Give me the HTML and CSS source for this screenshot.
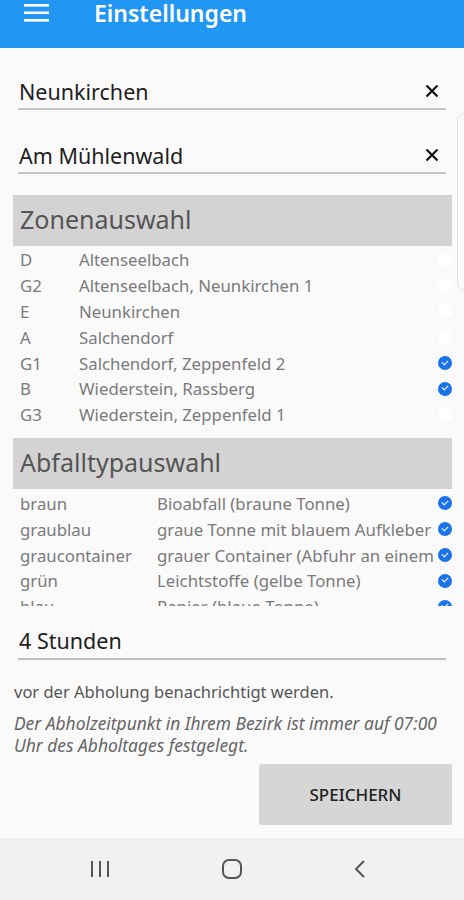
FILE: index.html
```html
<!DOCTYPE html>
<html lang="de">
<head>
  <meta charset="UTF-8">
  <meta name="viewport" content="width=device-width, initial-scale=1.0">
  <title>Einstellungen</title>
  <link rel="stylesheet" href="styles.css">
</head>
<body>
<div class="app">
  <header class="toolbar">
    <svg class="menu-icon" width="26" height="22" viewBox="0 0 26 22">
      <rect x="0" y="4" width="25" height="2.6" fill="#fff"/>
      <rect x="0" y="11.5" width="25" height="2.6" fill="#fff"/>
      <rect x="0" y="19" width="25" height="2.6" fill="#fff"/>
    </svg>
    <h1 class="title">Einstellungen</h1>
  </header>

  <main class="content">
    <div class="field first">
      <span class="field-text">Neunkirchen</span>
      <svg class="clear" width="14" height="14" viewBox="0 0 14 14"><path d="M1.5 1.5 L12.5 12.5 M12.5 1.5 L1.5 12.5" stroke="#111" stroke-width="2.2"/></svg>
    </div>
    <div class="field second">
      <span class="field-text">Am Mühlenwald</span>
      <svg class="clear" width="14" height="14" viewBox="0 0 14 14"><path d="M1.5 1.5 L12.5 12.5 M12.5 1.5 L1.5 12.5" stroke="#111" stroke-width="2.2"/></svg>
    </div>

    <div class="section-head zone-head">Zonenauswahl</div>
    <ul class="select-list zones">
      <li><span class="code">D</span><span class="name">Altenseelbach</span><span class="check"></span></li>
      <li><span class="code">G2</span><span class="name">Altenseelbach, Neunkirchen 1</span><span class="check"></span></li>
      <li><span class="code">E</span><span class="name">Neunkirchen</span><span class="check"></span></li>
      <li><span class="code">A</span><span class="name">Salchendorf</span><span class="check"></span></li>
      <li><span class="code">G1</span><span class="name">Salchendorf, Zeppenfeld 2</span><span class="check on"></span></li>
      <li><span class="code">B</span><span class="name">Wiederstein, Rassberg</span><span class="check on"></span></li>
      <li><span class="code">G3</span><span class="name">Wiederstein, Zeppenfeld 1</span><span class="check"></span></li>
    </ul>

    <div class="section-head waste-head">Abfalltypauswahl</div>
    <ul class="select-list waste">
      <li><span class="code">braun</span><span class="name">Bioabfall (braune Tonne)</span><span class="check on"></span></li>
      <li><span class="code">graublau</span><span class="name">graue Tonne mit blauem Aufkleber</span><span class="check on"></span></li>
      <li><span class="code">graucontainer</span><span class="name">grauer Container (Abfuhr an einem Tag)</span><span class="check on"></span></li>
      <li><span class="code">grün</span><span class="name">Leichtstoffe (gelbe Tonne)</span><span class="check on"></span></li>
      <li><span class="code">blau</span><span class="name">Papier (blaue Tonne)</span><span class="check on"></span></li>
    </ul>

    <div class="field hours">
      <span class="field-text">4 Stunden</span>
    </div>
    <p class="note">vor der Abholung benachrichtigt werden.</p>
    <p class="hint">Der Abholzeitpunkt in Ihrem Bezirk ist immer auf 07:00 Uhr des Abholtages festgelegt.</p>

    <div class="actions">
      <button class="save">SPEICHERN</button>
    </div>
  </main>

  <nav class="navbar">
    <svg width="22" height="18" viewBox="0 0 22 18"><path d="M3 1 V17 M11 1 V17 M19 1 V17" stroke="#555" stroke-width="2"/></svg>
    <svg width="22" height="22" viewBox="0 0 22 22"><rect x="2" y="2" width="18" height="18" rx="6" fill="none" stroke="#555" stroke-width="2"/></svg>
    <svg width="14" height="20" viewBox="0 0 14 20"><path d="M11 2 L3 10 L11 18" fill="none" stroke="#555" stroke-width="2"/></svg>
  </nav>

  <div class="edge-handle"></div>
</div>
</body>
</html>
```

FILE: styles.css
```css
*{
  box-sizing: border-box;
}
html, body{
  margin: 0;
  padding: 0;
}
body{
  font-family: "Noto Sans", Roboto, "Liberation Sans", sans-serif;
  background: #fafafa;
}
.app{
  position: relative;
  width: 464px;
  height: 900px;
  display: flex;
  flex-direction: column;
  overflow: hidden;
}
.toolbar{
  height: 48px;
  background: #2196f3;
  display: flex;
  align-items: flex-start;
  padding-left: 24px;
  flex-shrink: 0;
}
.title{
  margin: 0 0 0 44px;
  color: #fff;
  font-size: 23px;
  font-weight: 600;
  line-height: 26px;
}
.content{
  flex: 1;
  display: flex;
  flex-direction: column;
  padding: 0 12px 0 13px;
}
.field{
  display: flex;
  align-items: center;
  justify-content: space-between;
  margin: 0 6px 0 5px;
  border-bottom: 2px solid #c4c4c4;
  height: 38px;
  padding: 0 7px 0 1px;
}
.field.first{
  margin-top: 24px;
}
.field.second{
  margin-top: 26px;
}
.field-text{
  font-size: 21.5px;
  color: #1e1e1e;
  padding-top: 2px;
}
.clear{
  margin-top: 2px;
}
.section-head{
  background: #d3d3d3;
  color: #555;
  font-size: 25px;
  height: 51px;
  line-height: 49px;
  padding-left: 7px;
}
.zone-head{
  margin-top: 21px;
}
.waste-head{
  margin-top: 10px;
}
.select-list{
  list-style: none;
  margin: 0;
  padding: 0;
}
.select-list li{
  display: flex;
  align-items: center;
  height: 25.8px;
  font-size: 16.8px;
  color: #7a7a7a;
  padding-left: 7px;
}
.zones{
  padding-top: 1px;
}
.zones .code{
  width: 59px;
}
.waste{
  height: 117px;
  overflow: hidden;
  padding-top: 2px;
}
.waste .code{
  width: 137px;
}
.name{
  flex: 1;
  white-space: nowrap;
  overflow: hidden;
}
.check{
  width: 14px;
  height: 14px;
  border-radius: 50%;
  background: #fff;
  margin-left: 4px;
  flex-shrink: 0;
  position: relative;
}
.check.on{
  background: #1a73e8;
}
.check.on::after{
  content: "";
  position: absolute;
  left: 4px;
  top: 3.5px;
  width: 5px;
  height: 3px;
  border-left: 1.5px solid #fff;
  border-bottom: 1.5px solid #fff;
  transform: rotate(-45deg);
}
.field.hours{
  margin-top: 16px;
  padding-right: 0;
  border-bottom-color: #bdbdbd;
}
.note{
  margin: 20px 0 0 1px;
  font-size: 16.5px;
  color: #555;
}
.hint{
  margin: 9px 0 0 1px;
  font-size: 17.4px;
  line-height: 22px;
  font-style: italic;
  color: #666;
}
.actions{
  display: flex;
  justify-content: flex-end;
  margin-top: 8px;
}
.save{
  width: 193px;
  height: 61px;
  border: none;
  border-radius: 2px;
  background: #d6d6d6;
  font-family: "Noto Sans", Roboto, "Liberation Sans", sans-serif;
  font-size: 17px;
  font-weight: 500;
  color: #222;
}
.navbar{
  height: 62px;
  background: #f1f1f1;
  display: flex;
  align-items: center;
  justify-content: space-between;
  padding: 0 97px 0 89px;
  flex-shrink: 0;
}
.edge-handle{
  position: absolute;
  left: 457px;
  top: 113px;
  width: 20px;
  height: 178px;
  border: 1.5px solid #e2e2e2;
  border-radius: 8px;
  background: #fafafa;
}
```
